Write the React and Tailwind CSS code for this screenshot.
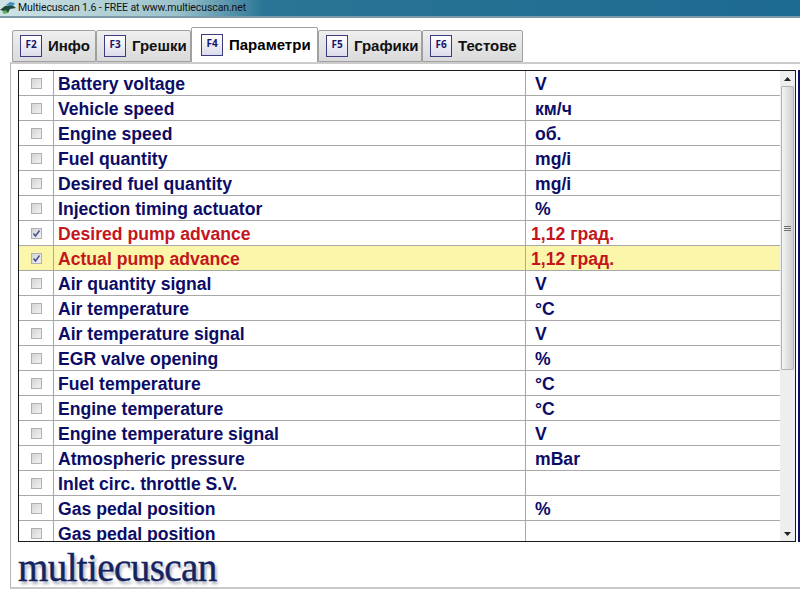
import React from "react";

const rows = [
  { name: "Battery voltage", unit: "V" },
  { name: "Vehicle speed", unit: "км/ч" },
  { name: "Engine speed", unit: "об." },
  { name: "Fuel quantity", unit: "mg/i" },
  { name: "Desired fuel quantity", unit: "mg/i" },
  { name: "Injection timing actuator", unit: "%" },
  { name: "Desired pump advance", value: "1,12 град.", checked: true },
  { name: "Actual pump advance", value: "1,12 град.", checked: true, highlight: true },
  { name: "Air quantity signal", unit: "V" },
  { name: "Air temperature", unit: "°C" },
  { name: "Air temperature signal", unit: "V" },
  { name: "EGR valve opening", unit: "%" },
  { name: "Fuel temperature", unit: "°C" },
  { name: "Engine temperature", unit: "°C" },
  { name: "Engine temperature signal", unit: "V" },
  { name: "Atmospheric pressure", unit: "mBar" },
  { name: "Inlet circ. throttle S.V.", unit: "" },
  { name: "Gas pedal position", unit: "%" },
  { name: "Gas pedal position", unit: "" },
];

const tabs = [
  { key: "F2", label: "Инфо", width: "w-[84px]" },
  { key: "F3", label: "Грешки", width: "w-[95px]" },
  { key: "F4", label: "Параметри", width: "w-[127px]", active: true },
  { key: "F5", label: "Графики", width: "w-[104px]" },
  { key: "F6", label: "Тестове", width: "w-[101px]" },
];

const Checkbox = ({ checked }) => (
  <div className="flex h-[11px] w-[11px] items-center justify-center border border-[#b0b0b0] bg-gradient-to-br from-[#d4d4d4] to-[#f2f2f2]">
    {checked && (
      <svg width="9" height="9" viewBox="0 0 9 9">
        <path d="M1.5 4.5 L3.5 7 L7.5 1.5" fill="none" stroke="#3f4f8f" strokeWidth="1.4" />
      </svg>
    )}
  </div>
);

const Row = ({ row }) => {
  const color = row.checked ? "text-[#c4161c]" : "text-[#0c0c66]";
  return (
    <div
      className={`flex h-[25px] shrink-0 border-b border-[#a8a8a8] ${row.highlight ? "bg-[#fbf6a9]" : "bg-white"} ${color}`}
    >
      <div className="flex w-[35px] shrink-0 items-center justify-center border-r border-[#a8a8a8] pl-[1px]">
        <Checkbox checked={row.checked} />
      </div>
      <div className="flex w-[472px] shrink-0 items-center border-r border-[#a8a8a8] pl-[4px] pt-[2px] text-[17.6px] font-bold">
        {row.name}
      </div>
      <div className={`flex flex-1 items-center pt-[2px] text-[17.6px] font-bold ${row.value ? "pl-[5px]" : "pl-[9px]"}`}>
        {row.value || row.unit}
      </div>
    </div>
  );
};

const Tab = ({ tab }) => (
  <div
    className={`flex shrink-0 items-center gap-[6px] rounded-t-[2px] border border-[#a0a0a0] ${tab.width} ${
      tab.active
        ? "h-[35px] border-b-0 bg-white pl-[9px] text-black"
        : "h-[32px] bg-gradient-to-b from-[#efefef] to-[#dadada] pl-[7px] text-[#111111]"
    }`}
  >
    <div className="flex h-[22px] w-[22px] items-center justify-center border border-[#3b3b80] bg-gradient-to-b from-white to-[#dcdcec] pb-[3px] font-['Open_Sans',sans-serif] text-[10px] font-bold text-[#15156b]">
      {tab.key}
    </div>
    <span className="pt-[1px] text-[15px] font-bold">{tab.label}</span>
  </div>
);

const Scrollbar = () => (
  <div className="flex w-[15px] shrink-0 flex-col items-center bg-[#eeeeee]">
    <div className="flex h-[15px] items-center justify-center text-[#222222]">
      <svg width="7" height="4" viewBox="0 0 7 4">
        <path d="M3.5 0 L7 4 L0 4 Z" fill="currentColor" />
      </svg>
    </div>
    <div className="flex h-[284px] w-[13px] items-center justify-center rounded-[1px] border border-[#b4b4b4] bg-gradient-to-r from-[#f4f4f4] to-[#cfcfd2]">
      <div className="flex flex-col gap-[1px]">
        <div className="h-[1px] w-[7px] bg-[#707070]" />
        <div className="h-[1px] w-[7px] bg-[#707070]" />
        <div className="h-[1px] w-[7px] bg-[#707070]" />
      </div>
    </div>
    <div className="flex-1" />
    <div className="flex h-[15px] items-center justify-center text-[#222222]">
      <svg width="7" height="4" viewBox="0 0 7 4">
        <path d="M0 0 L7 0 L3.5 4 Z" fill="currentColor" />
      </svg>
    </div>
  </div>
);

export default function App() {
  return (
    <div className="flex h-[591px] w-[800px] flex-col overflow-hidden bg-white font-['Liberation_Sans',sans-serif]">
      {/* Title bar */}
      <div className="flex h-[18px] shrink-0 items-center gap-[1px] border-b-2 border-[#7d99a8] bg-[linear-gradient(90deg,#cfe3e5_0%,#9cc3cc_22%,#2a7595_33%,#1d6a92_100%)]">
        <svg width="17" height="14" viewBox="0 0 17 14" className="shrink-0">
          <path d="M0 9 L5 5 L12 4 L16 7 L10 8 L8 12 L4 10 Z" fill="#1f4a3a" />
          <path d="M6 4 L10 1 L15 2 L13 5 Z" fill="#3f8fc0" />
          <path d="M2 11 L6 9 L8 12 L4 13 Z" fill="#5fb060" />
        </svg>
        <span className="font-['Roboto',sans-serif] text-[10.5px] tracking-[-0.1px] text-[#111111]">
          Multiecuscan 1.6 - FREE at www.multiecuscan.net
        </span>
      </div>

      {/* Tabs */}
      <div className="flex h-[44px] shrink-0 items-end pl-[12px]">
        {tabs.map((tab) => (
          <Tab key={tab.key} tab={tab} />
        ))}
      </div>

      {/* Panel */}
      <div className="ml-[10px] flex h-[527px] flex-col border-t-2 border-l border-b-2 border-t-[#cccccc] border-l-[#b4b4b4] border-b-[#c8c8c8] pl-[7px] pt-[6px]">
        <div className="flex h-[472px] shrink-0">
          <div className="flex w-[778px] shrink-0 overflow-hidden border border-[#1a1a1a]">
            <div className="flex flex-1 flex-col overflow-hidden">
              {rows.map((row, i) => (
                <Row key={i} row={row} />
              ))}
            </div>
            <Scrollbar />
          </div>
          <div className="w-[2px] shrink-0" />
          <div className="w-[3px] shrink-0 bg-[#10106a]" />
        </div>
        <div className="flex-1 pt-[4px]">
          <span className="font-['Liberation_Serif',serif] text-[39px] leading-[44px] tracking-[-0.6px] text-[#15245f] [-webkit-text-stroke:0.4px_#15245f] [text-shadow:2px_3px_3px_#a8adba]">
            multiecuscan
          </span>
        </div>
      </div>
    </div>
  );
}
